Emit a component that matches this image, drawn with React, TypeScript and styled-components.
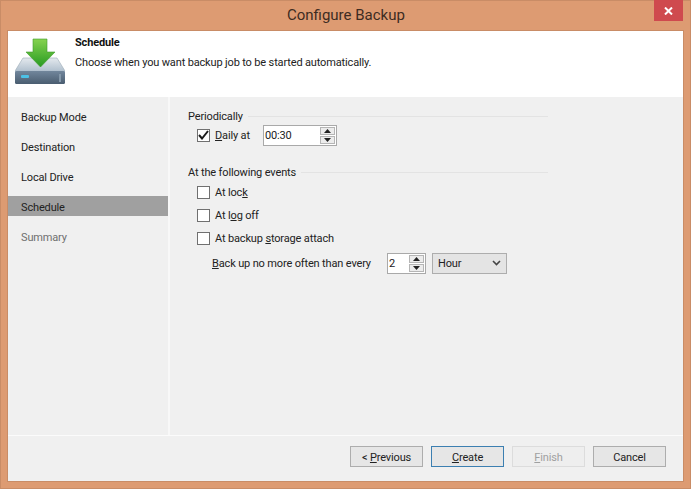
import React from 'react'
import styled, { createGlobalStyle } from 'styled-components'

const GlobalStyle = createGlobalStyle`
  html, body {
    margin: 0;
    padding: 0;
    width: 691px;
    height: 489px;
    overflow: hidden;
    background: #dd9b72;
  }
  * {
    box-sizing: border-box;
  }
`

const steps = ['Backup Mode', 'Destination', 'Local Drive', 'Schedule', 'Summary']

const DriveIcon = () => (
  <svg width="50" height="47" viewBox="0 0 50 47">
    <defs>
      <linearGradient id="driveTop" x1="0" y1="0" x2="0" y2="1">
        <stop offset="0" stopColor="#e4e9ee" />
        <stop offset="1" stopColor="#a9bac9" />
      </linearGradient>
      <linearGradient id="driveFront" x1="0" y1="0" x2="0" y2="1">
        <stop offset="0" stopColor="#71869c" />
        <stop offset="1" stopColor="#4a5d70" />
      </linearGradient>
      <linearGradient id="arrow" x1="0" y1="0" x2="0" y2="1">
        <stop offset="0" stopColor="#86d34f" />
        <stop offset="1" stopColor="#279a22" />
      </linearGradient>
    </defs>
    <path d="M8 20H42L50 33V35H0V33Z" fill="url(#driveTop)" stroke="#9aa9b6" strokeWidth="0.6" />
    <rect x="0" y="33" width="50" height="13" rx="1.5" fill="url(#driveFront)" />
    <rect x="6" y="37" width="8" height="3" rx="1" fill="#4cc1e6" />
    <rect x="44" y="36" width="2" height="8" fill="#8498aa" />
    <path d="M18 1H32V14H40L25.5 29L11 14H18Z" fill="url(#arrow)" stroke="#3f9a2c" strokeWidth="0.6" />
  </svg>
)

const SpinArrows = () => (
  <SpinBox>
    <SpinHalf>
      <svg width="7" height="4" viewBox="0 0 7 4">
        <path d="M3.5 0L7 4H0Z" fill="#222" />
      </svg>
    </SpinHalf>
    <SpinHalf>
      <svg width="7" height="4" viewBox="0 0 7 4">
        <path d="M0 0H7L3.5 4Z" fill="#222" />
      </svg>
    </SpinHalf>
  </SpinBox>
)

const Check = ({ checked, label }: { checked?: boolean; label: React.ReactNode }) => (
  <CheckRow>
    <CheckBox>
      {checked && (
        <svg width="11" height="10" viewBox="0 0 11 10">
          <path d="M1 5L4 8.5L10 1" fill="none" stroke="#1c1c1c" strokeWidth="2" />
        </svg>
      )}
    </CheckBox>
    <span>{label}</span>
  </CheckRow>
)

export default function App() {
  return (
    <>
      <GlobalStyle />
      <Window>
        <TitleBar>
          <Title>Configure Backup</Title>
          <CloseButton>
            <svg width="9" height="8" viewBox="0 0 9 8">
              <path d="M1 0.5L8 7.5M8 0.5L1 7.5" stroke="#fff" strokeWidth="2" />
            </svg>
          </CloseButton>
        </TitleBar>
        <Frame>
          <Header>
            <DriveIcon />
            <HeaderText>
              <HeaderTitle>Schedule</HeaderTitle>
              <HeaderNote>Choose when you want backup job to be started automatically.</HeaderNote>
            </HeaderText>
          </Header>
          <Body>
            <Sidebar>
              {steps.map(step => (
                <Step key={step} $active={step === 'Schedule'} $disabled={step === 'Summary'}>
                  {step}
                </Step>
              ))}
            </Sidebar>
            <Content>
              <Legend>Periodically</Legend>
              <DailyRow>
                <DailyCheck>
                  <Check checked label={<><u>D</u>aily at</>} />
                </DailyCheck>
                <SpinField $width={74}>
                  <SpinValue>00:30</SpinValue>
                  <SpinArrows />
                </SpinField>
              </DailyRow>
              <EventsLegend>At the following events</EventsLegend>
              <EventList>
                <Check label={<>At loc<u>k</u></>} />
                <Check label={<>At l<u>o</u>g off</>} />
                <Check label={<>At backup <u>s</u>torage attach</>} />
              </EventList>
              <LimitRow>
                <LimitLabel><u>B</u>ack up no more often than every</LimitLabel>
                <SpinField $width={39}>
                  <SpinValue>2</SpinValue>
                  <SpinArrows />
                </SpinField>
                <Select>
                  <span>Hour</span>
                  <svg width="9" height="6" viewBox="0 0 9 6">
                    <path d="M1 1L4.5 4.5L8 1" fill="none" stroke="#444" strokeWidth="1.6" />
                  </svg>
                </Select>
              </LimitRow>
            </Content>
          </Body>
          <Footer>
            <Button><span>&lt; <u>P</u>revious</span></Button>
            <Button $focused><span><u>C</u>reate</span></Button>
            <Button $disabled><span><u>F</u>inish</span></Button>
            <Button><span>Cancel</span></Button>
          </Footer>
        </Frame>
      </Window>
    </>
  )
}

const Window = styled.div`
  width: 691px;
  height: 489px;
  padding: 0 8px 8px;
  display: flex;
  flex-direction: column;
  background: #dd9b72;
  box-shadow: inset 0 0 0 1px #c98c66;
  font-family: Roboto, 'Liberation Sans', sans-serif;
  font-size: 11px;
  letter-spacing: -0.15px;
  color: #222;
`

const TitleBar = styled.div`
  height: 31px;
  flex: none;
  display: flex;
  align-items: flex-start;
  justify-content: space-between;
  padding-left: 279px;
`

const Title = styled.div`
  margin-top: 6px;
  font-size: 15px;
  letter-spacing: 0;
  color: #3d2c22;
`

const CloseButton = styled.div`
  width: 29px;
  height: 21px;
  display: flex;
  align-items: center;
  justify-content: center;
  background: #cf4a4e;
`

const Frame = styled.div`
  flex: 1;
  display: flex;
  flex-direction: column;
  box-shadow: 0 0 0 1px #c98c66;
`

const Header = styled.div`
  height: 66px;
  flex: none;
  padding: 7px 0 0 7px;
  display: flex;
  gap: 10px;
  background: #fff;
`

const HeaderText = styled.div`
  display: flex;
  flex-direction: column;
  gap: 4px;
  margin-top: -3px;
`

const HeaderTitle = styled.div`
  font-weight: 700;
  color: #111;
  line-height: 16px;
`

const HeaderNote = styled.div`
  line-height: 16px;
  color: #222;
`

const Body = styled.div`
  flex: 1;
  display: flex;
  background: #f0f0f0;
  border-bottom: 1px solid #fbfbfb;
`

const Sidebar = styled.div`
  width: 162px;
  flex: none;
  padding-top: 4px;
  display: flex;
  flex-direction: column;
  border-right: 2px solid #f8f8f8;
`

const Step = styled.div<{ $active?: boolean; $disabled?: boolean }>`
  height: 20px;
  margin: 5px 0;
  padding: 2px 0 0 13px;
  display: flex;
  align-items: center;
  background: ${p => (p.$active ? '#a0a0a0' : 'transparent')};
  color: ${p => (p.$disabled ? '#6f6f6f' : '#222')};
`

const Content = styled.div`
  flex: 1;
  padding: 11px 0 0 18px;
  display: flex;
  flex-direction: column;
`

const Legend = styled.div`
  width: 360px;
  height: 16px;
  display: flex;
  align-items: center;
  gap: 5px;

  &::after {
    content: '';
    flex: 1;
    height: 1px;
    background: #e3e3e3;
  }
`

const EventsLegend = styled(Legend)`
  margin-top: 19px;
`

const DailyRow = styled.div`
  height: 20px;
  margin-top: 1px;
  padding-left: 9px;
  display: flex;
  align-items: center;
`

const DailyCheck = styled.div`
  width: 66px;
`

const CheckRow = styled.label`
  display: flex;
  align-items: center;
  gap: 5px;
`

const CheckBox = styled.span`
  width: 13px;
  height: 13px;
  display: flex;
  align-items: center;
  justify-content: center;
  background: #fff;
  border: 1px solid #707070;
`

const EventList = styled.div`
  margin-top: 4px;
  padding-left: 9px;
  display: flex;
  flex-direction: column;
  gap: 6.5px;

  & > label {
    height: 16.5px;
  }
`

const LimitRow = styled.div`
  margin-top: 6px;
  padding-left: 24px;
  display: flex;
  align-items: center;
`

const LimitLabel = styled.span`
  width: 175px;
  white-space: nowrap;
`

const SpinField = styled.div<{ $width: number }>`
  width: ${p => p.$width}px;
  height: 21px;
  padding: 0 1px 0 1px;
  display: flex;
  align-items: center;
  justify-content: space-between;
  background: #fff;
  border: 1px solid #a9a9a9;
`

const SpinValue = styled.span`
  color: #222;
`

const SpinBox = styled.div`
  width: 15px;
  height: 17px;
  display: flex;
  flex-direction: column;
  gap: 1px;
`

const SpinHalf = styled.div`
  flex: 1;
  display: flex;
  align-items: center;
  justify-content: center;
  background: #ececec;
  border: 1px solid #b5b5b5;
`

const Select = styled.div`
  width: 75px;
  height: 21px;
  margin-left: 6px;
  padding: 0 5px;
  display: flex;
  align-items: center;
  justify-content: space-between;
  background: #e4e4e4;
  border: 1px solid #adadad;
`

const Footer = styled.div`
  height: 45px;
  flex: none;
  padding: 10px 17px 0 0;
  display: flex;
  justify-content: flex-end;
  gap: 8px;
  background: #f0f0f0;
`

const Button = styled.div<{ $focused?: boolean; $disabled?: boolean }>`
  width: 73px;
  height: 21px;
  padding-top: 2px;
  display: flex;
  align-items: center;
  justify-content: center;
  background: ${p => (p.$disabled ? '#eeeeee' : '#e6e6e6')};
  border: 1px solid ${p => (p.$focused ? '#3c7fb1' : p.$disabled ? '#dcdcdc' : '#adadad')};
  color: ${p => (p.$disabled ? '#a0a0a0' : '#222')};
`
